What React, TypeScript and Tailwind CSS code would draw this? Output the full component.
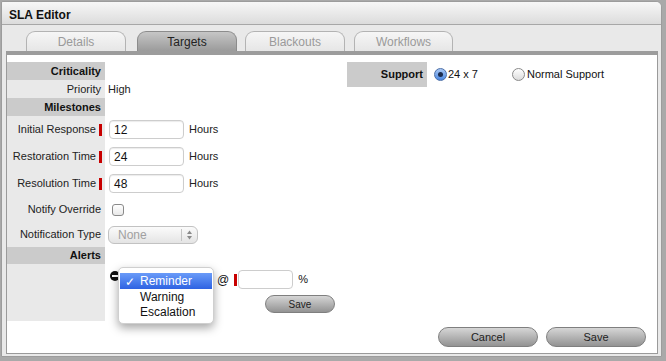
import React from "react";

const font = { fontFamily: '"Liberation Sans", Arial, sans-serif' };

function Marker() {
  return <span className="ml-[3px] inline-block w-[3px] h-[12px] bg-[#c80000]" />;
}

function Header({ children }: { children: React.ReactNode }) {
  return (
    <div className="flex h-[18px]">
      <div className="w-[98px] bg-[#cbcbcb] flex items-center justify-end pr-[4px] text-[11px] font-bold text-[#111]">
        {children}
      </div>
    </div>
  );
}

function TextInput({ value, w }: { value: string; w: string }) {
  return (
    <div
      className={`${w} h-[19px] bg-white border border-[#cdcdcd] rounded-[4px] shadow-[inset_0_1px_1px_rgba(0,0,0,0.08)] flex items-center pl-[4px] text-[12px] text-[#111]`}
    >
      {value}
    </div>
  );
}

function MilestoneRow({ label, value }: { label: string; value: string }) {
  return (
    <div className="flex h-[27px]">
      <div className="w-[98px] bg-[#e9e9e9] flex items-center justify-end pr-[3px] text-[11px] text-[#222]">
        <span>{label}</span>
        <Marker />
      </div>
      <div className="flex items-center pl-[4px] text-[11px] text-[#222]">
        <TextInput value={value} w="w-[75px]" />
        <span className="ml-[5px]">Hours</span>
      </div>
    </div>
  );
}

function Tab({ label, active, cls }: { label: string; active?: boolean; cls: string }) {
  return (
    <div
      className={`${cls} h-[20px] rounded-t-[9px] border border-b-0 flex items-center justify-center pt-[1px] text-[12px] ${
        active
          ? "border-[#8c8c8c] bg-gradient-to-b from-[#c6c6c6] to-[#9b9b9b] text-[#222]"
          : "border-[#b3b3b3] bg-gradient-to-b from-[#f6f6f6] to-[#e6e6e6] text-[#9a9a9a]"
      }`}
    >
      {label}
    </div>
  );
}

function PillButton({ label, cls, text }: { label: string; cls: string; text: string }) {
  return (
    <div
      className={`${cls} rounded-full border border-[#7f7f7f] bg-gradient-to-b from-[#d6d6d6] via-[#b4b4b4] to-[#939393] flex items-center justify-center ${text} text-[#222]`}
    >
      {label}
    </div>
  );
}

export default function App() {
  return (
    <div className="w-[666px] h-[361px] bg-[#a9a9a9] pt-[1px] pl-[1px] overflow-hidden" style={font}>
      <div className="w-[661px] bg-[#e9e9e9] border border-[#9c9c9c] rounded-tr-[6px] rounded-tl-[2px] overflow-hidden pb-[2px]">
        {/* Title bar */}
        <div className="h-[23px] border-b border-[#a7a7a7] bg-gradient-to-b from-[#f7f7f7] to-[#dcdcdc] flex items-center pt-[3px] pl-[7px] text-[12px] font-bold text-[#111]">
          SLA Editor
        </div>

        {/* Tabs */}
        <div className="flex mt-[6px] pl-[24px]">
          <Tab label="Details" cls="w-[100px]" />
          <Tab label="Targets" active cls="w-[100px] ml-[11px]" />
          <Tab label="Blackouts" cls="w-[100px] ml-[8px]" />
          <Tab label="Workflows" cls="w-[99px] ml-[9px]" />
        </div>

        {/* Panel */}
        <div className="ml-[4px] w-[652px] bg-white border border-[#9a9a9a] border-t-[4px] border-t-[#9c9c9c] pt-[7px] pb-[6px]">
          <div className="flex">
            {/* Left table */}
            <div className="w-[340px]">
              <Header>Criticality</Header>
              <div className="flex h-[18px]">
                <div className="w-[98px] bg-[#e9e9e9] flex items-center justify-end pr-[4px] text-[11px] text-[#222]">
                  Priority
                </div>
                <div className="flex items-center pl-[3px] text-[11px] text-[#222]">High</div>
              </div>
              <Header>Milestones</Header>
              <MilestoneRow label="Initial Response" value="12" />
              <MilestoneRow label="Restoration Time" value="24" />
              <MilestoneRow label="Resolution Time" value="48" />
              <div className="flex h-[25px]">
                <div className="w-[98px] bg-[#e9e9e9] flex items-center justify-end pr-[4px] text-[11px] text-[#222]">
                  Notify Override
                </div>
                <div className="flex items-center pl-[7px]">
                  <div className="w-[12px] h-[12px] rounded-[3px] border border-[#8a8a8a] bg-gradient-to-b from-white to-[#e9e9e9]" />
                </div>
              </div>
              <div className="flex h-[25px]">
                <div className="w-[98px] bg-[#e9e9e9] flex items-center justify-end pr-[4px] text-[11px] text-[#222]">
                  Notification Type
                </div>
                <div className="flex items-center pl-[3px]">
                  <div className="w-[90px] h-[18px] rounded-[6px] border border-[#c2c2c2] bg-gradient-to-b from-[#fbfbfb] to-[#e4e4e4] flex items-center text-[12px] text-[#a0a0a0]">
                    <span className="pl-[9px] flex-1">None</span>
                    <div className="w-px h-[12px] bg-[#c4c4c4]" />
                    <div className="w-[15px] flex justify-center">
                      <svg width="7" height="10" viewBox="0 0 7 10">
                        <path d="M3.5 0.5 L6 4 L1 4 Z" fill="#8a8a8a" />
                        <path d="M3.5 9.5 L6 6 L1 6 Z" fill="#8a8a8a" />
                      </svg>
                    </div>
                  </div>
                </div>
              </div>
              <div className="flex h-[17px]">
                <div className="w-[98px] bg-[#cbcbcb] flex items-center justify-end pr-[4px] text-[11px] font-bold text-[#111]">
                  Alerts
                </div>
              </div>
              <div className="flex h-[57px]">
                <div className="w-[98px] bg-[#e9e9e9]" />
                <div className="relative flex-1 pt-[6px] pl-[5px]">
                  <div className="flex h-[19px] items-center text-[12px] text-[#111]">
                    <div className="self-start mt-[1px] w-[10px] h-[10px] rounded-full bg-[#111] flex items-center justify-center">
                      <div className="w-[6px] h-[2px] bg-white" />
                    </div>
                    <div className="w-[94px]" />
                    <span className="ml-[3px]">@</span>
                    <span className="ml-[5px] inline-block w-[3px] h-[12px] bg-[#c80000]" />
                    <div className="ml-[1px] w-[55px] h-[19px] bg-white border border-[#cdcdcd] rounded-[4px]" />
                    <span className="ml-[5px] text-[11px]">%</span>
                  </div>
                  <div className="mt-[6px] ml-[155px]">
                    <PillButton label="Save" cls="w-[70px] h-[18px]" text="text-[10px]" />
                  </div>
                  {/* open dropdown menu */}
                  <div className="absolute left-[13px] top-[3px] w-[96px] h-[57px] bg-white border border-[#cfcfcf] rounded-[5px] shadow-[0_4px_10px_rgba(0,0,0,0.35)] pt-[5px] z-10 text-[12px] text-[#111]">
                    <div className="relative mx-[1px] h-[16px] bg-gradient-to-b from-[#6a9bf8] to-[#2f62e2] text-white flex items-center pl-[20px]">
                      <span className="absolute left-[5px] top-[0px] text-[12px]">✓</span>
                      Reminder
                    </div>
                    <div className="h-[15px] flex items-center pl-[21px]">Warning</div>
                    <div className="h-[15px] flex items-center pl-[21px]">Escalation</div>
                  </div>
                </div>
              </div>
            </div>

            {/* Right: Support */}
            <div className="flex items-start">
              <div className="flex h-[25px] items-center">
                <div className="w-[80px] h-[25px] bg-[#cbcbcb] flex items-center justify-end pr-[4px] text-[11px] font-bold text-[#111]">
                  Support
                </div>
                <div className="ml-[7px] w-[13px] h-[13px] rounded-full border border-[#4c6fa8] bg-gradient-to-b from-[#a9c8f4] to-[#4a86e0] flex items-center justify-center">
                  <div className="w-[5px] h-[5px] rounded-full bg-[#1b2c4e]" />
                </div>
                <span className="ml-[1px] text-[11px] text-[#111]">24 x 7</span>
                <div className="ml-[34px] w-[13px] h-[13px] rounded-full border border-[#8a8a8a] bg-gradient-to-b from-white to-[#dcdcdc]" />
                <span className="ml-[2px] text-[11px] text-[#111]">Normal Support</span>
              </div>
            </div>
          </div>

          {/* Bottom buttons */}
          <div className="flex justify-end mt-[6px] pr-[11px] gap-[8px]">
            <PillButton label="Cancel" cls="w-[100px] h-[20px]" text="text-[11px]" />
            <PillButton label="Save" cls="w-[100px] h-[20px]" text="text-[11px]" />
          </div>
        </div>
      </div>
    </div>
  );
}
